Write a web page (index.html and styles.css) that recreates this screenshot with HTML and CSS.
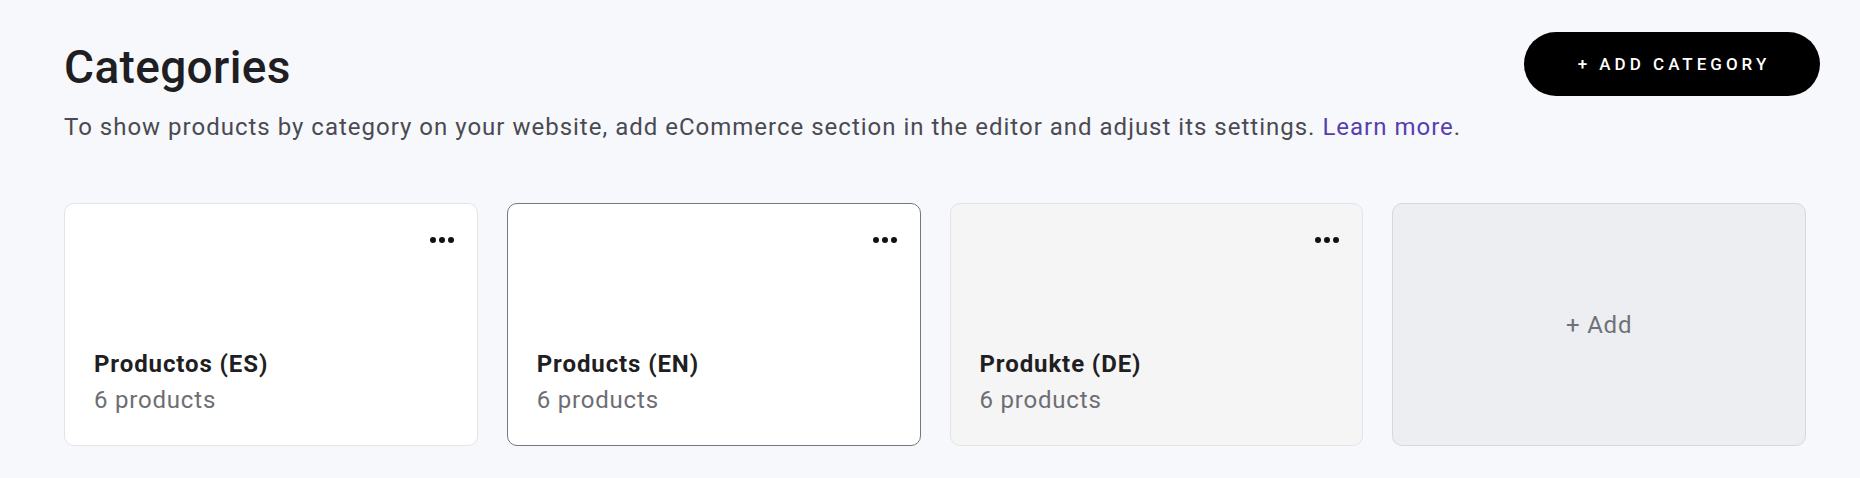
FILE: index.html
```html
<!DOCTYPE html>
<html lang="en">
<head>
    <meta charset="UTF-8">
    <meta name="viewport" content="width=device-width, initial-scale=1.0">
    <title>Categories</title>
    <link rel="stylesheet" href="styles.css">
</head>
<body>
    <main class="kategoriak">
        <header class="kategoriak-fejlec">
            <div class="fejlec-szoveg">
                <h1>Categories</h1>
                <p class="leiras">To show products by category on your website, add eCommerce section in the editor and adjust its settings. <a href="#">Learn more</a>.</p>
            </div>
            <button class="uj-kategoria">+ ADD CATEGORY</button>
        </header>

        <div class="kartya-racs">
            <div class="kartya">
                <div class="kartya-menu">
                    <svg width="24" height="6" viewBox="0 0 24 6"><circle cx="3" cy="3" r="3"/><circle cx="12" cy="3" r="3"/><circle cx="21" cy="3" r="3"/></svg>
                </div>
                <div>
                    <h3>Productos (ES)</h3>
                    <p class="darab">6 products</p>
                </div>
            </div>
            <div class="kartya kijelolt">
                <div class="kartya-menu">
                    <svg width="24" height="6" viewBox="0 0 24 6"><circle cx="3" cy="3" r="3"/><circle cx="12" cy="3" r="3"/><circle cx="21" cy="3" r="3"/></svg>
                </div>
                <div>
                    <h3>Products (EN)</h3>
                    <p class="darab">6 products</p>
                </div>
            </div>
            <div class="kartya szurke">
                <div class="kartya-menu">
                    <svg width="24" height="6" viewBox="0 0 24 6"><circle cx="3" cy="3" r="3"/><circle cx="12" cy="3" r="3"/><circle cx="21" cy="3" r="3"/></svg>
                </div>
                <div>
                    <h3>Produkte (DE)</h3>
                    <p class="darab">6 products</p>
                </div>
            </div>
            <div class="kartya hozzaad">+ Add</div>
        </div>
    </main>
</body>
</html>
```

FILE: styles.css
```css
* {
    box-sizing: border-box;
    margin: 0;
    padding: 0;
}

body {
    background-color: #f7f8fc;
    font-family: Roboto, "Liberation Sans", sans-serif;
    color: #1f1f23;
}

.kategoriak {
    padding: 32px 40px 0 64px;
}

.kategoriak-fejlec {
    display: flex;
    justify-content: space-between;
    align-items: flex-start;
}

h1 {
    margin-top: 7px;
    font-size: 46px;
    font-weight: 500;
    line-height: 56px;
    letter-spacing: 0.35px;
}

.leiras {
    margin-top: 16px;
    font-size: 24px;
    line-height: 32px;
    letter-spacing: 1px;
    color: #4a4a52;
}

.leiras a {
    color: #553fae;
    text-decoration: none;
}

.uj-kategoria {
    width: 296px;
    height: 64px;
    border: none;
    border-radius: 32px;
    background-color: #000;
    color: #fff;
    font-family: Roboto, "Liberation Sans", sans-serif;
    font-size: 17px;
    font-weight: 500;
    letter-spacing: 4px;
    padding-left: 4px;
}

.kartya-racs {
    display: grid;
    grid-template-columns: repeat(4, 1fr);
    gap: 29px;
    margin: 60px 14px 0 0;
}

.kartya {
    height: 243px;
    display: flex;
    flex-direction: column;
    justify-content: space-between;
    padding: 33px 23px 27px 29px;
    border: 1px solid #e3e4e8;
    border-radius: 10px;
    background-color: #fff;
}

.kartya.kijelolt {
    border-color: #77777d;
}

.kartya.szurke {
    background-color: #f5f5f6;
}

.kartya-menu {
    display: flex;
    justify-content: flex-end;
}

.kartya-menu svg {
    display: block;
    fill: #111;
}

.kartya h3 {
    font-size: 24px;
    font-weight: 700;
    line-height: 36px;
    letter-spacing: 0.9px;
}

.darab {
    font-size: 24px;
    line-height: 36px;
    letter-spacing: 0.8px;
    color: #6d6e73;
}

.kartya.hozzaad {
    justify-content: center;
    align-items: center;
    padding: 0;
    background-color: #eceef1;
    border-color: #d6d8dc;
    font-size: 24px;
    letter-spacing: 0.8px;
    color: #6e7177;
}
```
